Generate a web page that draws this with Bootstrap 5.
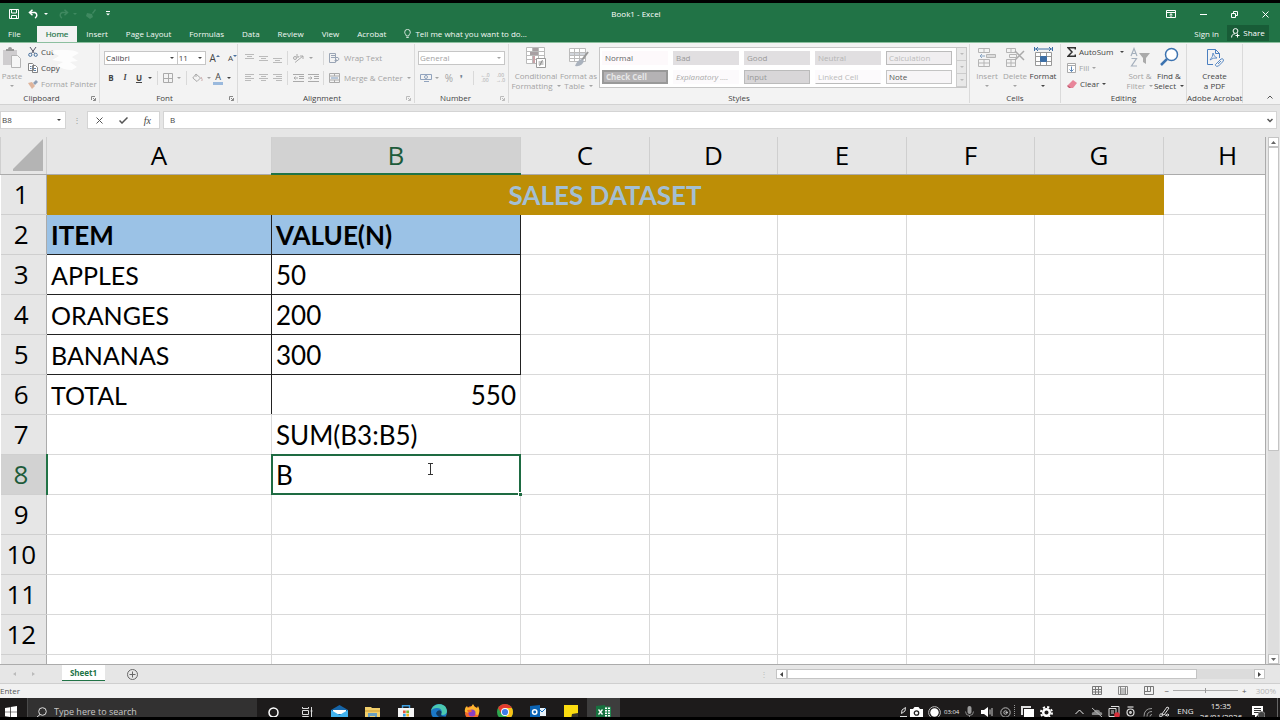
<!DOCTYPE html>
<html lang="en">
<head>
<meta charset="utf-8">
<meta name="viewport" content="width=device-width, initial-scale=1">
<title>Book1 - Excel</title>
<link href="https://cdn.jsdelivr.net/npm/bootstrap@5.3.0/dist/css/bootstrap.min.css" rel="stylesheet">
<style>
:root{--ui:"Open Sans","Noto Sans",sans-serif;--green:#217346}
body{font-family:var(--ui);font-size:8px;line-height:10px;color:#444;background:#000;overflow:hidden}
button,input,select{font:inherit;color:inherit}
svg{display:block;flex:none}
.app{height:100vh;padding:3px 0}
.app>*{flex-shrink:0}
.b0{border:0;background:none;padding:0;display:flex;align-items:center;justify-content:center;white-space:nowrap;flex:none}
/* title bar */
.titlebar{background:var(--green);color:#fff;height:22px}
.quick{gap:9px;padding-left:9px;width:106px}
.tabs{background:var(--green);height:18px;border-bottom:1px solid #8cbf9f}
.tabs a{color:#f1f8f4;text-decoration:none;padding:4px 9px 3px;white-space:nowrap}
.tabs a.active{background:#f3f3f3;color:var(--green);-webkit-text-stroke:.2px;margin-top:1px;padding-top:3px}
.share{background:#185c37;width:42px;height:16px;gap:3px;margin-right:11px}
/* ribbon */
.ribbon{background:#f3f3f3;height:62px;border-bottom:1px solid #d2d2d2}
.grp{border-right:1px solid #dadada;height:59px;margin-top:1px;display:flex;flex-direction:column;flex:none;position:relative}
.grp-body{height:47px;flex:none}
.grp-name{text-align:center;font-size:8px;line-height:10px;margin-top:2px}
.launch{position:absolute;right:3px;bottom:2px}
.g-clip{width:100px}.g-font{width:138px}.g-align{width:177px}.g-num{width:94px}.g-cells{width:91px}.g-edit{width:126px}.g-pdf{width:56px}
.off{color:#a3a3a3}
.faint{opacity:.5}
.rowh{height:20px;display:flex;align-items:center}
.row16{height:16px;display:flex;align-items:center;gap:3px;white-space:nowrap}
.caret{width:0;height:0;border:2px solid transparent;border-top-color:currentColor;border-bottom:0;flex:none}
.vsep{width:1px;height:14px;background:#d9d9d9;margin:0 3px;flex:none}
.w14{width:14px}.w15{width:15px}.w8{width:8px}.w16{width:16px}
.big{flex-direction:column;justify-content:flex-start;align-self:flex-start;padding-top:3px}
.big svg{margin-bottom:3px}
.big .caret{margin-top:4px}
.combo{background:#fff;border:1px solid #c6c6c6;height:14px;display:flex;align-items:center;justify-content:space-between}
.combo select{appearance:none;border:0;background:none;padding:0 0 0 1px;width:100%;line-height:10px;opacity:1}
.combo .caret{margin-right:3px}
.gallery{background:#fff;border:1px solid #c6c6c6;width:368px;height:41px;padding-left:2px}
.swatches{display:grid;grid-template-columns:repeat(5,66px);column-gap:5px;row-gap:5px;padding:3px 0 3px}
.sw{height:14px;border:1px solid transparent;background:#e1dfe1;justify-content:flex-start;padding-left:2px;color:#999;overflow:hidden}
.gscroll{width:10px;background:#e8e8e8;border-left:1px solid #ccc}
.gscroll button{height:13px;border-bottom:1px solid #ccc!important;width:100%;color:#bbb}
/* formula bar */
.fbar{background:#e6e6e6;height:32px;padding-top:6px}
.fbar>*{height:18px;background:#fff;border:1px solid #d4d4d4}
.fbar input{border:0;outline:0;background:none;padding:0}
.namebox{width:66px;padding:0 4px 0 1px}
.dots{border:0!important;background:none!important;width:21px;color:#999}
.fx{width:73px}
/* sheet */
.sheet{background:#e6e6e6;min-height:0;flex:1 1 0}
.view{min-width:0;overflow:hidden;border-right:1px solid #ababab;background:#fff}
table.cells{table-layout:fixed;width:1291px;border-collapse:collapse;font-family:Lato,sans-serif;font-size:26px;line-height:30px;color:#000}
.cells td,.cells th{height:40px;padding:2px 4px 0;border:1px solid #d9d9d9;white-space:nowrap;overflow:hidden}
.cells th{font-family:var(--ui);font-weight:400;background:#e6e6e6;text-align:center;padding:0 0 0;border-color:#cfcfcf}
.cells thead th{height:37px;border-top:0;border-bottom-color:#ababab}
.cells tbody th{padding-right:4px;border-left:0;border-right-color:#ababab}
.cells thead th.on{background:#d2d2d2;color:#1d5b3a;border-bottom:2px solid var(--green)}
.cells tbody th.on{background:#d2d2d2;color:#1d5b3a;border-right:2px solid var(--green)}
.cells .head{background:#bd8e06;color:#a3bfd4;font-weight:700;text-align:center;border-color:#bd8e06}
.cells .blue td.k{background:#9bc2e6;font-weight:700}
.cells td.k{border-color:#222}
.cells td.kr{border-right-color:#222}
.cells td.name{font-size:25px}
.cells td.act{position:relative;overflow:visible}
.act::before{content:"";position:absolute;inset:-1px;border:2px solid #1e6b42;pointer-events:none}
.act::after{content:"";position:absolute;right:-2px;bottom:-2px;width:4px;height:4px;background:#1e6b42;border:1px solid #fff;border-right:0;border-bottom:0}
.ibeam{position:absolute;left:155px;top:8px}
.vbar{width:14px;padding:0 1px 0 2px}
.sbtn{background:#fff;border:1px solid #c4c4c4;color:#666;width:11px;height:10px}
.vthumb{background:#fff;border:1px solid #c4c4c4;width:11px;height:304px}
.vtrack{background:#dedede;width:11px}
/* bottom strips */
.sheettabs{background:#e6e6e6;border-top:1px solid #ababab;border-bottom:1px solid #cfcfcf;height:20px;color:#bbb}
.stab{background:#fff;color:var(--green);font-weight:700;width:43px;height:16px;border-bottom:1px solid var(--green)!important;margin-left:19px;align-self:flex-start}
.hscroll{width:489px;background:#dcdcdc;height:10px;margin-right:15px}
.hthumb{background:#fff;border:1px solid #c4c4c4;width:410px;height:10px}
.status{background:#f1f1f1;height:14px;color:#555;padding-bottom:1px}
.status input{width:65px;height:8px;appearance:none;background:linear-gradient(#aaa,#aaa) center/100% 1px no-repeat}
.status input::-webkit-slider-thumb{appearance:none;width:1px;height:5px;background:#999}
.taskbar{background:#1d1b1b;height:19px;overflow:hidden;color:#eee}
.taskbar>*{height:28px}
.search{background:#323131;border-left:1px solid #4a4a4a;width:230px;padding-left:8px;gap:7px;margin-left:9px}
.search input{border:0;background:none;outline:0;color:#ccc;font-size:9px;line-height:14px;padding:0}
.search input::placeholder{color:#c8c8c8;opacity:1}
.tk{width:33px}
.tk.run{background:#3d3d3d}
.rec{display:grid;grid-template-columns:10px 14px 20px 15px 20px 17px 18px 4px 19px 18px;margin-right:16px}
.rec span{font-size:6px}
.t17{width:17px}
.clock{width:46px;text-align:center;line-height:11px;font-size:8px;padding-top:2px}
</style>
</head>
<body>
<div class="app d-flex flex-column">

<header class="titlebar d-flex align-items-center justify-content-between">
  <div class="quick d-flex align-items-center">
    <button class="b0" aria-label="Save"><svg width="10" height="10" viewBox="0 0 10 10" fill="none" stroke="#fff"><path d="M.5.5h9v9h-9zM2.500 .5v3.500h5V.5M2.500 9.500V6.500h5v3"/></svg></button>
    <button class="b0 gap-1" aria-label="Undo"><svg width="12" height="10" viewBox="0 0 12 10" fill="none" stroke="#fff" stroke-width="1.500"><path d="M4.500 .8 1.500 3.500l3 2.700M1.800 3.500H7a3 3 0 0 1 0 5.500"/></svg><i class="caret"></i></button>
    <button class="b0 gap-1 faint" aria-label="Redo" disabled><svg width="12" height="10" viewBox="0 0 12 10" fill="none" stroke="#5d9f7a" stroke-width="1.500"><path d="m7.500 .8 3 2.700-3 2.700M10.200 3.500H5a3 3 0 0 0 0 5.500"/></svg><i class="caret" style="color:#5d9f7a"></i></button>
    <button class="b0 faint" aria-label="Paint format" disabled><svg width="10" height="10" viewBox="0 0 10 10" fill="#5d9f7a"><path d="m6 4 3-4 1 1-3 4zM1 4l5 1 1 3-3 2-4-3z"/></svg></button>
    <button class="b0" aria-label="Customize toolbar"><svg width="6" height="6" viewBox="0 0 6 6" fill="#fff"><path d="M1 0h4v1H1zM1 2.500h4l-2 2z"/></svg></button>
  </div>
  <div>Book1 - Excel</div>
  <div class="d-flex align-items-center justify-content-between" style="width:114px;padding-right:11px">
    <button class="b0" aria-label="Ribbon options"><svg width="10" height="8" viewBox="0 0 10 8" fill="none" stroke="#fff"><path d="M.5.5h9v7h-9zM.5 2.500h9M5 7V4M3.500 5 5 3.700 6.500 5"/></svg></button>
    <button class="b0" aria-label="Minimize"><svg width="7" height="7" stroke="#fff"><path d="M0 3.500h7"/></svg></button>
    <button class="b0" aria-label="Restore"><svg width="7" height="7" fill="none" stroke="#fff"><path d="M.5 2.500h4v4h-4zM2.500 2V.5h4v4H5"/></svg></button>
    <button class="b0" aria-label="Close"><svg width="7" height="7" stroke="#fff"><path d="m.5.5 6 6m0-6-6 6"/></svg></button>
  </div>
</header>

<nav class="tabs d-flex align-items-stretch" aria-label="Ribbon tabs">
  <a href="#" style="padding-left:8px;padding-right:16px">File</a><a href="#" class="active">Home</a><a href="#">Insert</a><a href="#">Page Layout</a><a href="#">Formulas</a><a href="#">Data</a><a href="#">Review</a><a href="#">View</a><a href="#">Acrobat</a>
  <a href="#" class="d-flex gap-1"><svg width="7" height="10" viewBox="0 0 7 10" fill="none" stroke="#fff" stroke-width=".8"><path d="M2.300 7C2.300 5.500.7 5 .7 3.200a2.800 2.800 0 0 1 5.600 0C6.300 5 4.700 5.500 4.700 7zM2.300 8.500h2.400"/></svg>Tell me what you want to do...</a>
  <a href="#" class="ms-auto px-2">Sign in</a>
  <button class="b0 share text-white"><svg width="9" height="10" viewBox="0 0 9 10" fill="none" stroke="#fff"><circle cx="4.500" cy="3" r="2.400"/><path d="M.6 9.500C.6 7 2 5.800 4 5.800M6.500 5.500v4M4.500 7.500h4"/></svg>Share</button>
</nav>

<section class="ribbon d-flex" aria-label="Ribbon">
  <div class="grp g-clip">
    <div class="grp-body d-flex">
      <button class="b0 big off" style="width:24px" disabled><svg width="20" height="21" viewBox="0 0 20 21"><path d="M1 3h14v15H1z" fill="#cfcdcf"/><path d="M4 4V2h2a2 2 0 0 1 4 0h2v2z" fill="#999"/><path d="M9.500 8.500h6l3 3v9h-9z" fill="#f6f6f6" stroke="#b5b5b5"/></svg>Paste<i class="caret"></i></button>
      <div class="ps-1">
        <button class="b0 row16"><svg width="10" height="10" viewBox="0 0 10 10" fill="none" stroke="#556"><path d="m2 0 4.500 6.500M8 0 3.500 6.500"/><circle cx="2.300" cy="7.800" r="1.600" stroke="#48719e"/><circle cx="7.700" cy="7.800" r="1.600" stroke="#48719e"/></svg>Cut</button>
        <button class="b0 row16"><svg width="10" height="10" viewBox="0 0 10 10" fill="#fff" stroke="#777" stroke-width=".9"><path d="M.5.5h4l1 1v6h-5zM4.500 2.500h3l2 2v5h-5z"/><path d="M6 5.500h2M6 7.500h2M2 3.500h1.500M2 5.500h1.500" stroke="#48719e"/></svg>Copy</button>
        <button class="b0 row16 off" disabled><svg width="10" height="9" viewBox="0 0 10 9"><path d="m5 3 3-3 2 2-3 3z" fill="#8fa0b5"/><path d="M0 3l4-1 3 4-3 3z" fill="#dfb59c"/></svg>Format Painter</button>
      </div>
    </div>
    <svg width="36" height="28" viewBox="0 0 36 28" style="position:absolute;left:46px;top:3px" fill="#fff" opacity=".85"><path d="M4 4q10-2 17-1 8 0 12 3l-7 4 6 4-8 1 7 5-5 3q-10 0-15-5l6-3-11-2 7-4z"/></svg>
    <div class="grp-name" style="margin-right:16px">Clipboard</div>
    <svg class="launch" width="5" height="5" fill="none" stroke="#888"><path d="M.5 4V.5H4M2 2l2.500 2.500M4.500 2v2.500H2"/></svg>
  </div>

  <div class="grp g-font ps-1">
    <div class="grp-body pt-1">
      <div class="rowh">
        <div class="combo" style="width:74px"><select aria-label="Font"><option>Calibri</option></select><i class="caret"></i></div>
        <div class="combo border-start-0" style="width:28px"><select aria-label="Size"><option>11</option></select><i class="caret"></i></div>
        <button class="b0 ms-1" style="font-size:10px">A<svg width="4" height="8" viewBox="0 0 4 8"><path d="m0 3 2-2 2 2z" fill="#48719e"/></svg></button>
        <button class="b0 ms-2">A<svg width="4" height="8" viewBox="0 0 4 8"><path d="m0 1 2 2 2-2z" fill="#48719e"/></svg></button>
      </div>
      <div class="rowh">
        <button class="b0 w14 fw-bold">B</button><button class="b0 w14 fw-bold fst-italic" style="font-family:'Liberation Serif',serif">I</button><button class="b0 w14 fw-bold text-decoration-underline">U</button><button class="b0 w8" aria-label="Underline options"><i class="caret"></i></button>
        <i class="vsep"></i>
        <button class="b0 w14 off" aria-label="Borders"><svg width="10" height="10" fill="none" stroke="#aaa"><path d="M.5.5h9v9h-9zM5.500 0v10M0 5.500h10"/></svg></button><button class="b0 w8 off" aria-label="Border options"><i class="caret"></i></button>
        <i class="vsep"></i>
        <button class="b0 w15 off" aria-label="Fill colour"><svg width="11" height="10" viewBox="0 0 11 10" fill="none" stroke="#aaa"><path d="m4 1 4.500 4L5 8.500.8 5zM4 1v3"/><path d="M9 4q2 3 .8 4" stroke="#caa"/></svg></button><button class="b0 w8 off" aria-label="Fill options"><i class="caret"></i></button>
        <button class="b0" style="font-size:9px;width:10px;height:13px;border-bottom:3px solid #9ab9dd" aria-label="Font colour">A</button><button class="b0 w8 ps-1" aria-label="Font colour options"><i class="caret"></i></button>
      </div>
    </div>
    <div class="grp-name" style="padding-right:12px">Font</div>
    <svg class="launch" width="5" height="5" fill="none" stroke="#888"><path d="M.5 4V.5H4M2 2l2.500 2.500M4.500 2v2.500H2"/></svg>
  </div>

  <div class="grp g-align ps-1">
    <div class="grp-body pt-1">
      <div class="rowh off">
        <button class="b0 w14" aria-label="Top align"><svg width="9" height="9" stroke="#bbb"><path d="M0 .5h9M2 2.500h5M0 4.500h9"/></svg></button><button class="b0 w14" aria-label="Middle align"><svg width="9" height="9" stroke="#bbb"><path d="M0 2.500h9M2 4.500h5M0 6.500h9"/></svg></button><button class="b0 w14" aria-label="Bottom align"><svg width="9" height="9" stroke="#bbb"><path d="M0 4.500h9M2 6.500h5M0 8.500h9"/></svg></button>
        <i class="vsep"></i>
        <button class="b0 w15" aria-label="Orientation"><svg width="11" height="10" viewBox="0 0 11 10" fill="none" stroke="#aaa"><path d="M2 9.500 10 3M7 3h3v3"/><circle cx="2" cy="5" r="1.500"/><path d="M4 1v3q2 1 2-1"/></svg></button><button class="b0 w14 pe-1" aria-label="Orientation options"><i class="caret"></i></button>
        <i class="vsep"></i>
        <button class="b0 gap-1" style="margin-left:2px"><svg width="11" height="10" viewBox="0 0 11 10" fill="none" stroke="#9aa5b5"><path d="M.5.500h6v9h-6zM2 2.500h5M2 4.500h7q2 1.500 0 3H6M7.500 6 6 7.500 7.500 9"/></svg>Wrap Text</button>
      </div>
      <div class="rowh off">
        <button class="b0 w14" aria-label="Align left"><svg width="9" height="9" stroke="#bbb"><path d="M0 .5h9M0 2.500h6M0 4.500h9M0 6.500h6"/></svg></button><button class="b0 w14" aria-label="Center"><svg width="9" height="9" stroke="#bbb"><path d="M0 .5h9M2 2.500h5M0 4.500h9M2 6.500h5"/></svg></button><button class="b0 w14" aria-label="Align right"><svg width="9" height="9" stroke="#bbb"><path d="M0 .5h9M3 2.500h6M0 4.500h9M3 6.500h6"/></svg></button>
        <i class="vsep"></i>
        <button class="b0 w15" aria-label="Decrease indent"><svg width="11" height="9" fill="none" stroke="#aaa"><path d="M0 .5h11M6 2.500h5M6 4.500h5M0 7.500h11M5 4H1m1.500-1.500L1 4l1.500 1.500"/></svg></button><button class="b0 w14" aria-label="Increase indent"><svg width="11" height="9" fill="none" stroke="#aaa"><path d="M0 .5h11M6 2.500h5M6 4.500h5M0 7.500h11M0 4h4M2.500 2.500 4 4 2.500 5.500"/></svg></button>
        <i class="vsep"></i>
        <button class="b0 gap-1" style="margin-left:2px"><svg width="11" height="10" fill="none" stroke="#aaa"><path d="M.5.5h10v9H.5zM0 3h11M0 7h11M5.500 0v3M5.500 7v3"/><path d="M2 5h7" stroke="#7f9cc0"/></svg>Merge &amp; Center<i class="caret"></i></button>
      </div>
    </div>
    <div class="grp-name" style="padding-right:12px">Alignment</div>
    <svg class="launch" width="5" height="5" fill="none" stroke="#bbb"><path d="M.5 4V.5H4M2 2l2.500 2.500M4.500 2v2.500H2"/></svg>
  </div>

  <div class="grp g-num">
    <div class="grp-body pt-1">
      <div class="rowh off"><div class="combo" style="width:87px;margin-left:3px"><select aria-label="Number format" disabled><option>General</option></select><i class="caret"></i></div></div>
      <div class="rowh off ps-1">
        <button class="b0 w14" aria-label="Currency"><svg width="12" height="10" viewBox="0 0 12 10" fill="none" stroke="#91a3bd"><path d="M.5 1.500h11v5H.5z"/><circle cx="6" cy="4" r="1.500"/><path d="M4 8.500h5"/></svg></button><button class="b0 w8" aria-label="Currency options"><i class="caret"></i></button>
        <button class="b0 w16" style="font-size:10px">%</button><button class="b0 w8 fw-bold" style="color:#789">❜</button>
        <i class="vsep ms-2"></i>
        <button class="b0 w16" style="font-size:5px;line-height:5px" aria-label="Increase decimal">←.0<br>.00</button><button class="b0 w15" style="font-size:5px;line-height:5px" aria-label="Decrease decimal">.00<br>→.0</button>
      </div>
    </div>
    <div class="grp-name" style="padding-right:12px">Number</div>
    <svg class="launch" width="5" height="5" fill="none" stroke="#bbb"><path d="M.5 4V.5H4M2 2l2.500 2.500M4.500 2v2.500H2"/></svg>
  </div>

  <div class="grp flex-grow-1">
    <div class="grp-body d-flex ps-1">
      <button class="b0 big off" style="width:46px" disabled><svg width="20" height="21" viewBox="0 0 20 21" fill="#fff" stroke="#bbb"><path d="M.5.500h18v16H.5zM.5 4.500h18M.5 8.500h18M.5 12.500h18M6.500.5v16M12.500.5v16"/><path d="M7 1h5v3H7zM4 5h8v3H4z" fill="#a8a0a3" stroke="none"/><path d="M7 9h2v7H7z" fill="#c9a1a6" stroke="none"/><path d="M10.500 11.500h9v9h-9z" stroke="#999"/><path d="M12.500 15h5M12.500 17h5M16.500 13l-3 6" stroke="#777" stroke-width=".8"/></svg><span>Conditional</span><span class="d-flex align-items-center gap-1">Formatting<i class="caret m-0"></i></span></button>
      <button class="b0 big off" style="width:39px" disabled><svg width="20" height="21" viewBox="0 0 20 21" fill="#fff" stroke="#bbb"><path d="M.5 1.500h16v13H.5z"/><path d="M1 5h15v3H1z" fill="#d2d6dc" stroke="none"/><path d="M.5 5.500h16M.5 8.500h16M.5 11.500h16M5.500 1.500v13M10.500 1.500v13"/><path d="m19 5-6 8" stroke="#999" stroke-width="2"/><path d="M13 12q-5 1-7 7 7 1 9-5z" fill="#aab2bd" stroke="none"/></svg><span>Format as</span><span class="d-flex align-items-center gap-1">Table<i class="caret m-0"></i></span></button>
      <div class="gallery d-flex justify-content-between" style="margin:3px 0 0 1px">
        <div class="swatches">
          <button class="b0 sw" style="background:#fdf9fb;color:#666">Normal</button><button class="b0 sw">Bad</button><button class="b0 sw">Good</button><button class="b0 sw" style="color:#b5b5b5">Neutral</button><button class="b0 sw" style="background:#f0eef0;border:1px solid #bbb;color:#bbb">Calculation</button>
          <button class="b0 sw fw-bold" style="background:#b4b2b4;border:2px solid #999;color:#e6e6e6">Check Cell</button><button class="b0 sw fst-italic" style="background:#fcfafc;color:#aaa">Explanatory ....</button><button class="b0 sw" style="background:#d8d6d8;border:1px solid #bbb">Input</button><button class="b0 sw" style="background:#fcfafc;border-bottom:1px solid #bbb;color:#bbb">Linked Cell</button><button class="b0 sw" style="background:#f7f5f7;border:1px solid #c4c4c4;color:#555">Note</button>
        </div>
        <div class="gscroll"><button class="b0" aria-label="Scroll up"><i class="caret"></i></button><button class="b0" aria-label="Scroll down"><i class="caret"></i></button><button class="b0" aria-label="More styles"><i class="caret"></i></button></div>
      </div>
    </div>
    <div class="grp-name">Styles</div>
  </div>

  <div class="grp g-cells">
    <div class="grp-body d-flex justify-content-center">
      <button class="b0 big off" style="width:28px" disabled><svg width="18" height="21" viewBox="0 0 18 21" fill="none" stroke="#b5b5b5"><path d="M.5 1.500h11v4H.5zM6 1.500v4M.5 12.500h11v7H.5zM6 12.500v7M.5 16h11"/><path d="M8.500 7.500h9v3h-9z" fill="#ddd"/><path d="M7 9H2m2-2L2 9l2 2" stroke="#8aa6c4"/></svg>Insert<i class="caret"></i></button>
      <button class="b0 big off" style="width:28px" disabled><svg width="19" height="21" viewBox="0 0 19 21" fill="none" stroke="#b5b5b5"><path d="M.5 1.500h9v4h-9zM5 1.500v4M.5 12.500h9v7h-9zM5 12.500v7M.5 16h9M3.500 7.500h7v3h-7z"/><path d="m9 4 9 9m0-9-9 9" stroke="#aaa" stroke-width="1.500"/></svg>Delete<i class="caret"></i></button>
      <button class="b0 big" style="width:28px"><svg width="19" height="21" viewBox="0 0 19 21" fill="none" stroke="#999"><path d="M1.500 5.500h16v13h-16zM1.500 9.500h16M1.500 14.500h16M6.500 5.500v13M12.500 5.500v13" fill="#fff"/><path d="M6.500 9.500h6v5h-6z" fill="#3c6ea5" stroke="#3c6ea5"/><path d="M1 2h17M.5 0v4M18.500 0v4M4 0 2 2l2 2M15 0l2 2-2 2" stroke="#3c6ea5"/></svg>Format<i class="caret"></i></button>
    </div>
    <div class="grp-name">Cells</div>
  </div>

  <div class="grp g-edit">
    <div class="grp-body d-flex">
      <div style="padding-left:6px;width:64px">
        <button class="b0 row16"><svg width="9" height="10" viewBox="0 0 9 10" fill="none" stroke="#333" stroke-width="1.500"><path d="M8.300 2.500V.8H1L5 5 1 9.200h7.300V7.500"/></svg>AutoSum<i class="caret ms-1"></i></button>
        <button class="b0 row16 off"><svg width="9" height="10" fill="#fff" stroke="#aaa"><path d="M.5.5h8v9h-8zM.5 2.500h8"/><path d="M4.500 3.500v5m-2-2 2 2 2-2" stroke="#5b87b8"/></svg>Fill<i class="caret"></i></button>
        <button class="b0 row16"><svg width="10" height="9" viewBox="0 0 10 9"><path d="m1 5 5-5 4 3-4 5H3z" fill="#e8869a"/><path d="m1 5 3 3H2L0 6z" fill="#c5566f"/></svg>Clear<i class="caret"></i></button>
      </div>
      <button class="b0 big off" style="width:30px" disabled><svg width="20" height="21" viewBox="0 0 20 21"><g fill="none" stroke="#a5b0bd" stroke-width="1.200"><path d="M1 9 4 1.500 7 9M2 6.500h4"/><path d="M1.500 11.500h5L1.500 19h5.500"/></g><path d="M9 6h11l-4 5v6l-3-2v-4z" fill="#aaa"/></svg><span>Sort &amp;</span><span class="d-flex align-items-center gap-1">Filter<i class="caret m-0"></i></span></button>
      <button class="b0 big" style="width:28px"><svg width="19" height="21" viewBox="0 0 19 21" fill="none" stroke="#3c73b0"><circle cx="11.500" cy="7.500" r="6" fill="#fff" stroke-width="1.500"/><path d="m7 12-6 6" stroke-width="2.500"/></svg><span>Find &amp;</span><span class="d-flex align-items-center gap-1">Select<i class="caret m-0"></i></span></button>
    </div>
    <div class="grp-name">Editing</div>
  </div>

  <div class="grp g-pdf">
    <div class="grp-body d-flex justify-content-center">
      <button class="b0 big"><svg width="18" height="21" viewBox="0 0 18 21" fill="none" stroke="#4a7fc0"><path d="M7 17.500H1.500v-15h8l4 4V11M9.500 2.500v4h4"/><path d="M4 13q3-3 3-7 1 4 4 5-4-.5-7 2z" stroke-width=".8"/><path d="m10 17 5-5q2-1 2.500 1 0 1-1 2l-4 4q-2 1-3-.5-.5-1 .5-1.500zM12 17l3-3" stroke-width=".9"/></svg><span>Create</span><span>a PDF</span></button>
    </div>
    <div class="grp-name text-nowrap">Adobe Acrobat</div>
  </div>
  <button class="b0 align-items-end pb-1" style="width:37px;padding-left:17px" aria-label="Collapse ribbon"><svg width="6" height="5" fill="none" stroke="#555"><path d="M.5 3.500 3 1l2.500 2.500"/></svg></button>
</section>

<section class="fbar d-flex" aria-label="Formula bar">
  <div class="namebox d-flex align-items-center justify-content-between"><input value="B8" aria-label="Name box" class="w-75"><i class="caret"></i></div>
  <div class="dots d-flex align-items-center justify-content-center">⋮</div>
  <div class="fx d-flex align-items-center justify-content-around">
    <button class="b0" aria-label="Cancel"><svg width="7" height="7" stroke="#555"><path d="m.5.5 6 6m0-6-6 6"/></svg></button>
    <button class="b0" aria-label="Accept"><svg width="9" height="7" fill="none" stroke="#555" stroke-width="1.500"><path d="m.5 3.500 2.500 2.500L8.500.5"/></svg></button>
    <button class="b0 fst-italic" style="font:italic 10px 'Liberation Serif',serif">fx</button>
  </div>
  <div class="d-flex align-items-center flex-grow-1" style="margin:0 3px;padding:0 3px 0 6px"><input value="B" class="flex-grow-1" aria-label="Formula"><button class="b0" aria-label="Expand"><svg width="6" height="5" fill="none" stroke="#555" stroke-width="1.500"><path d="M.5 1 3 3.500 5.500 1"/></svg></button></div>
</section>

<main class="sheet d-flex">
  <div class="view flex-grow-1">
    <table class="cells">
      <colgroup><col style="width:46px"><col style="width:225px"><col style="width:249px"><col style="width:129px"><col style="width:128px"><col style="width:129px"><col style="width:128px"><col style="width:129px"><col style="width:128px"></colgroup>
      <thead><tr><th aria-label="Select all"><svg width="33" height="32" viewBox="0 0 33 32" class="ms-auto me-0"><path d="M32 0v32H0z" fill="#b4b4b4" transform="translate(-2)"/></svg></th><th>A</th><th class="on">B</th><th>C</th><th>D</th><th>E</th><th>F</th><th>G</th><th>H</th></tr></thead>
      <tbody>
        <tr><th>1</th><td class="head" colspan="7">SALES DATASET</td><td></td></tr>
        <tr class="blue"><th>2</th><td class="k">ITEM</td><td class="k">VALUE(N)</td><td></td><td></td><td></td><td></td><td></td><td></td></tr>
        <tr><th>3</th><td class="k name">APPLES</td><td class="k">50</td><td></td><td></td><td></td><td></td><td></td><td></td></tr>
        <tr><th>4</th><td class="k name">ORANGES</td><td class="k">200</td><td></td><td></td><td></td><td></td><td></td><td></td></tr>
        <tr><th>5</th><td class="k name">BANANAS</td><td class="k">300</td><td></td><td></td><td></td><td></td><td></td><td></td></tr>
        <tr><th>6</th><td class="kr name">TOTAL</td><td class="text-end">550</td><td></td><td></td><td></td><td></td><td></td><td></td></tr>
        <tr><th>7</th><td></td><td>SUM(B3:B5)</td><td></td><td></td><td></td><td></td><td></td><td></td></tr>
        <tr><th class="on">8</th><td></td><td class="act">B<svg class="ibeam" width="7" height="13" fill="none" stroke="#333"><path d="M1 .5h5M1 11.500h5M3.500 .5v11"/></svg></td><td></td><td></td><td></td><td></td><td></td><td></td></tr>
        <tr><th>9</th><td></td><td></td><td></td><td></td><td></td><td></td><td></td><td></td></tr>
        <tr><th>10</th><td></td><td></td><td></td><td></td><td></td><td></td><td></td><td></td></tr>
        <tr><th>11</th><td></td><td></td><td></td><td></td><td></td><td></td><td></td><td></td></tr>
        <tr><th>12</th><td></td><td></td><td></td><td></td><td></td><td></td><td></td><td></td></tr>
        <tr><th></th><td></td><td></td><td></td><td></td><td></td><td></td><td></td><td></td></tr>
      </tbody>
    </table>
  </div>
  <div class="vbar d-flex flex-column">
    <button class="b0 sbtn" aria-label="Scroll up"><svg width="5" height="3" fill="#666"><path d="m0 3 2.500-3L5 3z"/></svg></button>
    <div class="vthumb"></div><div class="vtrack flex-grow-1"></div>
    <button class="b0 sbtn" aria-label="Scroll down"><svg width="5" height="3" fill="#666"><path d="m0 0 2.500 3L5 0z"/></svg></button>
  </div>
</main>

<section class="sheettabs d-flex align-items-center">
  <button class="b0" style="margin-left:13px" aria-label="Previous sheet"><svg width="3" height="4" fill="#bbb"><path d="M3 0v4L0 2z"/></svg></button>
  <button class="b0" style="margin-left:16px" aria-label="Next sheet"><svg width="3" height="4" fill="#bbb"><path d="M0 0v4l3-2z"/></svg></button>
  <button class="b0 stab" style="margin-left:27px">Sheet1</button>
  <button class="b0" style="margin-left:22px" aria-label="New sheet"><svg width="11" height="11" fill="none" stroke="#666"><circle cx="5.500" cy="5.500" r="5"/><path d="M5.500 2.500v6M2.500 5.500h6"/></svg></button>
  <span class="ms-auto me-2">⋮</span>
  <div class="hscroll d-flex"><button class="b0 sbtn" aria-label="Scroll left"><svg width="3" height="5" fill="#444"><path d="M3 0v5L0 2.500z"/></svg></button><div class="hthumb"></div><button class="b0 sbtn ms-auto" aria-label="Scroll right"><svg width="3" height="5" fill="#444"><path d="M0 0v5l3-2.500z"/></svg></button></div>
</section>

<footer class="status d-flex align-items-center">
  <span>Enter</span>
  <div class="d-flex align-items-center ms-auto" style="gap:16px">
    <button class="b0" aria-label="Normal view"><svg width="10" height="9" fill="none" stroke="#777"><path d="M.5.5h9v8h-9zM3.500 0v9M6.500 0v9M0 3.500h10M0 6h10"/></svg></button>
    <button class="b0" aria-label="Page layout view"><svg width="10" height="9" fill="none" stroke="#888"><path d="M.5.5h9v8h-9zM2.500 .5v8M7.500 .5v8M3 3h4M3 5h4M3 7h4"/></svg></button>
    <button class="b0" aria-label="Page break view"><svg width="10" height="9" fill="none" stroke="#777"><path d="M.5.5h9v8h-9zM3.500 .5v5h3v-5M0 5.500h4"/></svg></button>
  </div>
  <div class="d-flex align-items-center ms-2 gap-1"><span style="width:7px" class="text-end">−</span><input type="range" aria-label="Zoom"><span>+</span><span style="color:#b5b5b5;margin:0 4px 0 5px">300%</span></div>
</footer>

<footer class="taskbar d-flex" aria-label="Taskbar">
  <button class="b0" style="width:18px;padding-left:4px" aria-label="Start"><svg width="12" height="12" viewBox="0 0 12 12" fill="#fff"><path d="M0 2l5-.8v4.500H0zM5.700 1 12 0v5.700H5.700zM0 6.300h5v4.600L0 10.200zM5.700 6.300H12V12l-6.300-.9z"/></svg></button>
  <div class="search d-flex align-items-center"><svg width="11" height="11" fill="none" stroke="#ddd"><circle cx="6.500" cy="4.500" r="3.800"/><path d="m4 7.500-3.500 3"/></svg><input placeholder="Type here to search" aria-label="Search"></div>
  <button class="b0 tk" aria-label="Cortana"><svg width="11" height="11" fill="none" stroke="#fff" stroke-width="1.500"><circle cx="5.500" cy="5.500" r="4.500"/></svg></button>
  <button class="b0 tk" aria-label="Task view"><svg width="12" height="11" fill="none" stroke="#ddd"><path d="M1.500 3.500h6v4h-6zM1.500 0v1.500h6V0M1.500 11V9.500h6V11M10.500 0v11M9.500 4h2"/></svg></button>
  <button class="b0 tk" aria-label="Mail"><svg width="17" height="14" viewBox="0 0 17 14"><path d="M0 5 8.500 0 17 5v9H0z" fill="#1565a8"/><path d="M2 5h13v4H2z" fill="#fff"/><path d="m0 5 8.500 5L17 5v9H0z" fill="#42b3ef"/></svg></button>
  <button class="b0 tk" aria-label="Files"><svg width="15" height="13" viewBox="0 0 15 13"><path d="M0 1h6l1 1h8v11H0z" fill="#f2cf6b"/><path d="M0 4h15v2H0z" fill="#e0b54c"/><path d="M3 7h9v6h-2v-3H5v3H3z" fill="#6a9fc0"/></svg></button>
  <button class="b0 tk" aria-label="Store"><svg width="16" height="14" viewBox="0 0 16 14"><path d="M4.500 3V.7h7V3" fill="none" stroke="#3d9ee0" stroke-width="1.400"/><path d="M0 3h16v11H0z" fill="#f5f5f5"/><path d="M5 5.500h2.700v2.700H5z" fill="#e8553d"/><path d="M8.300 5.500H11v2.700H8.300z" fill="#77b82a"/><path d="M5 8.800h2.700v2.700H5z" fill="#2e9fe0"/><path d="M8.300 8.800H11v2.700H8.300z" fill="#f6b51e"/></svg></button>
  <button class="b0 tk" aria-label="Edge"><svg width="16" height="16" viewBox="0 0 16 16"><circle cx="8" cy="8" r="8" fill="#1b78c8"/><path d="M0 7C1-1 15-3 16 7c0 4-5 5-6 3 2-3 0-6-4-6-3 0-5 1-6 3z" fill="#4cc9b0"/><path d="M5 9q2-4 5-2 1 2 0 3 0 3 5 2-4 3-7 1T5 9z" fill="#12395f"/></svg></button>
  <button class="b0 tk" aria-label="Firefox"><svg width="16" height="16" viewBox="0 0 16 16"><circle cx="8" cy="9" r="7" fill="#f5682c"/><path d="M1 8Q0 4 3 2l1 2 3-1 2-3q1 3 4 4l1-2q3 5 0 9z" fill="#fdb62f"/><circle cx="8" cy="9" r="3.500" fill="#8a3fc5"/><path d="M3 6q4-1 5 1-1 2-4 1z" fill="#f5682c"/></svg></button>
  <button class="b0 tk" aria-label="Chrome"><svg width="16" height="16" viewBox="0 0 16 16"><circle cx="8" cy="8" r="8" fill="#2fa84f"/><path d="M1.100 4A8 8 0 0 1 14.900 4L8 8z" fill="#e33b2e"/><path d="M14.900 4A8 8 0 0 1 8 16l3-7-3-5z" fill="#fbc116"/><path d="m1.100 4 3.500 6L8 4z" fill="#e33b2e"/><circle cx="8" cy="8" r="4" fill="#fff"/><circle cx="8" cy="8" r="3.100" fill="#3f7de8"/></svg></button>
  <button class="b0 tk" aria-label="Outlook"><svg width="16" height="14" viewBox="0 0 16 14"><path d="M9 3h7v8H9z" fill="#e9f3fb"/><path d="m9 4 3 3 4-4" stroke="#1673c4" fill="none"/><path d="M0 1 10 0v14L0 13z" fill="#0b64b5"/><circle cx="4.700" cy="7" r="2.200" fill="none" stroke="#fff" stroke-width="1.500"/></svg></button>
  <button class="b0 tk" aria-label="Sticky notes"><svg width="14" height="14" viewBox="0 0 14 14"><path d="M0 0h14v14H0z" fill="#fbdc10"/><path d="M14 8v6H7l1-5z" fill="#37342a"/></svg></button>
  <button class="b0 tk run" aria-label="Excel"><svg width="15" height="14" viewBox="0 0 15 14"><path d="M8 2h6.500v10H8z" fill="#fff" stroke="#21864f"/><path d="M8 4.500h6M8 7h6M8 9.500h6M11.500 2v10" stroke="#21864f"/><path d="M0 1 9 0v14l-9-1z" fill="#17723f"/><path d="m2.500 4.500 4 5m0-5-4 5" stroke="#fff" stroke-width="1.300"/></svg></button>

  <div class="rec ms-auto align-items-center justify-items-center">
    <svg width="7" height="11" fill="none" stroke="#ddd"><path d="M1.500 6.500q-1-4 4-6 1 4-4 6zM0 9.500h7"/></svg>
    <svg width="13" height="12" viewBox="0 0 13 12"><path d="M0 3h3l1.500-2h4L10 3h3v9H0z" fill="#fff"/><circle cx="6.500" cy="7" r="2.200" fill="#fff" stroke="#222" stroke-width="1.300"/></svg>
    <svg width="13" height="13" viewBox="0 0 13 13" class="mx-auto"><circle cx="6.500" cy="6.500" r="5.900" fill="none" stroke="#bbb"/><circle cx="6.500" cy="6.500" r="4.200" fill="#fff"/></svg>
    <span>03:04</span>
    <svg width="9" height="12" viewBox="0 0 9 12" class="mx-auto"><rect x="2.500" width="4" height="8" rx="2" fill="#999"/><path d="M.5 5.500a4 4 0 0 0 8 0M4.500 9v3" fill="none" stroke="#888"/></svg>
    <svg width="13" height="10" viewBox="0 0 13 10" class="mx-auto"><path d="M0 3h3l4-3v10L3 7H0z" fill="#fff"/><path d="M9 2.500v5M11 1v8" stroke="#ccc"/></svg>
    <svg width="11" height="11" fill="none" stroke="#bbb" class="mx-auto"><circle cx="5.500" cy="5.500" r="4.700"/><circle cx="5.500" cy="5.500" r="1.700"/><path d="M5.500 5.500H8"/></svg>
    <svg width="1" height="14" stroke="#999" stroke-dasharray="1 1"><path d="M.5 0v14"/></svg>
    <svg width="13" height="12" viewBox="0 0 13 12" class="mx-auto"><path d="M0 0h10v2H2v7H0z" fill="#ddd"/><path d="M3 3h10v9H3z" fill="#fff"/></svg>
    <svg width="13" height="13" viewBox="0 0 13 13" class="mx-auto" fill="none" stroke="#fff"><circle cx="6.500" cy="6.500" r="3.300" stroke-width="2.500"/><circle cx="6.500" cy="6.500" r="5.500" stroke-width="2" stroke-dasharray="2.200 2.120"/></svg>
  </div>
  <div class="d-flex">
    <button class="b0 t17" aria-label="Hidden icons"><svg width="9" height="6" fill="none" stroke="#eee"><path d="m.5 5 4-4 4 4"/></svg></button>
    <button class="b0 t17" aria-label="Cloud"><svg width="12" height="11" viewBox="0 0 12 11"><path d="M1 8q-1-3 2-3 1-3 4-2 2 0 2 2 3 0 2 3z" fill="#888"/><path d="m1 1 10 9" stroke="#bbb"/></svg></button>
    <button class="b0 t17" aria-label="Recorder"><svg width="12" height="12" viewBox="0 0 12 12"><path d="M1 2.500h7v8H1zM3 .5h8v8" fill="none" stroke="#ddd"/><path d="M3 5h3M3 7h3" stroke="#ddd"/><circle cx="9" cy="9" r="2.800" fill="#d5303b"/></svg></button>
    <button class="b0 t17" aria-label="Camera"><svg width="10" height="12" fill="none" stroke="#ddd" stroke-width="1.200"><path d="M1.500 1h6"/><circle cx="4.500" cy="6.500" r="3.500"/><circle cx="4.500" cy="6.500" r=".8"/></svg></button>
    <button class="b0 t17" aria-label="Network"><svg width="10" height="10" fill="none" stroke="#999"><path d="M1 9.500q0-8 8-8M4 9.500q0-5 5-5M7 9.500q0-2 2-2"/></svg></button>
    <button class="b0 t17" aria-label="Pen"><svg width="11" height="12" fill="none" stroke="#ddd"><path d="m3 8 5-7 2 1-5 7zM1 11q-1-4 2-3 2 2-2 3zM7 9q2-2 3 0-1 2-4 0"/></svg></button>
    <button class="b0" style="width:25px;margin-bottom:2px">ENG</button>
    <div class="clock">15:35<br>26/01/2026</div>
    <button class="b0" style="width:28px" aria-label="Notifications"><svg width="14" height="14" viewBox="0 0 14 14"><path d="M1 1h11v9H7l-3 3v-3H1z" fill="#fff"/><path d="M3 3.500h7M3 5.500h7M3 7.500h5" stroke="#333"/><circle cx="10.500" cy="10" r="3.500" fill="#444" stroke="#999" stroke-width=".7"/></svg></button>
    <i style="border-right:1px solid #666;width:6px;margin-right:2px"></i>
  </div>
</footer>
</div>
<script src="https://cdn.jsdelivr.net/npm/bootstrap@5.3.0/dist/js/bootstrap.bundle.min.js"></script>
</body>
</html>
